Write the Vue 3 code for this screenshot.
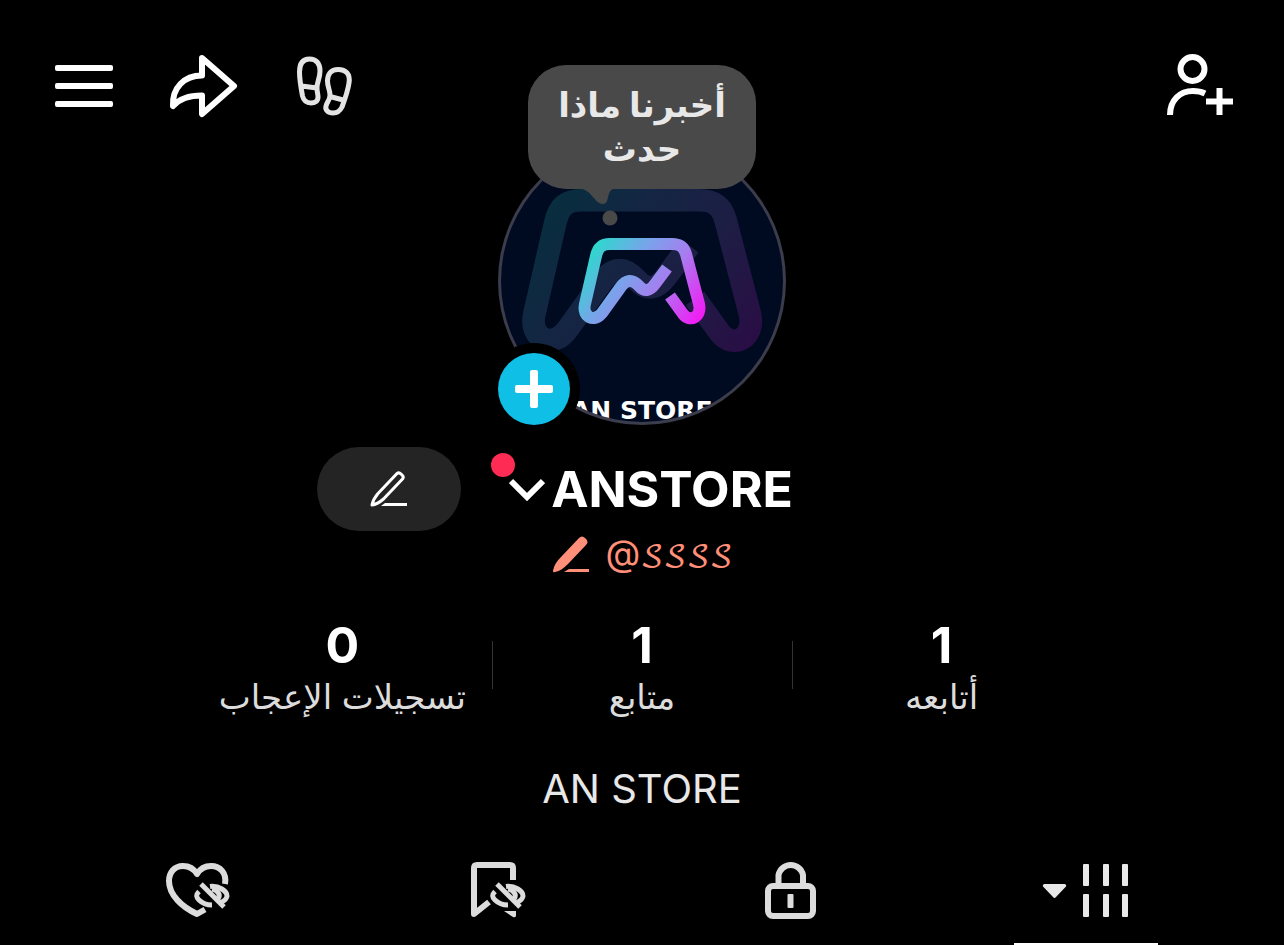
<template>
    <main class="profile">
        <header class="hero">
            <nav class="actions">
                <button class="icon-btn" aria-label="القائمة">
                    <svg viewBox="0 0 72 72" class="icon">
                        <rect v-for="y in [15, 33, 51]" :key="y" x="7" :y="y" width="58" height="6" rx="2" fill="#fff" />
                    </svg>
                </button>
                <button class="icon-btn" aria-label="مشاركة">
                    <svg viewBox="0 0 72 72" class="icon line">
                        <path d="M34 8L66 36L34 64V45.500C22 45.500 12 48 5 56C4 38 16 25.500 34 25.500Z" />
                    </svg>
                </button>
                <button class="icon-btn" aria-label="الزيارات">
                    <svg viewBox="0 0 72 72" class="icon line steps">
                        <path d="M11.500 22C11.500 13 15 9 21.500 9C28 9 32 13 32 21C32 29 28.500 33 29 38C29 42 30 44 30 47C30 51 27 53 23 53C18 53 15.500 50 14.500 46C13 38 11.500 30 11.500 22ZM13.500 36L29 38" />
                        <path d="M39.500 31C39.500 24 43 19.500 50 19.500C58 19.500 62.500 24 61 33C60 40 57 49 54 57C52 61 49 63 45 63C40 63 37 60 38 56C39 52 42 50 42 45C42 40 39.500 37 39.500 31ZM42 46.500L57 50.500" />
                    </svg>
                </button>
            </nav>

            <div class="avatar">
                <svg viewBox="0 0 288 288" class="avatar-art" aria-hidden="true">
                    <defs>
                        <linearGradient id="neon" gradientUnits="userSpaceOnUse" x1="95" y1="105" x2="205" y2="185">
                            <stop offset="0" stop-color="#28dccb" />
                            <stop offset=".33" stop-color="#78a4ea" />
                            <stop offset=".6" stop-color="#a77df0" />
                            <stop offset="1" stop-color="#f814f4" />
                        </linearGradient>
                        <clipPath id="round"><circle cx="144" cy="144" r="141" /></clipPath>
                    </defs>
                    <circle cx="144" cy="144" r="144" fill="#3b3c4c" />
                    <g clip-path="url(#round)">
                        <rect width="288" height="288" fill="#000b21" />
                        <g fill="none" stroke="url(#neon)" stroke-width="12">
                            <path :d="logo" opacity=".17" transform="translate(-128 -139) scale(1.89)" />
                            <path :d="logo" />
                        </g>
                        <text x="73" y="282" class="avatar-text">AN STORE</text>
                    </g>
                </svg>

                <button class="bubble" dir="rtl">
                    أخبرنا ماذا<br>حدث
                    <svg viewBox="0 0 40 40" class="tail" aria-hidden="true">
                        <path d="M0 0C10 2 13 15 21 15C28 15 24 3 31 0Z" />
                        <circle cx="28" cy="29" r="7.500" />
                    </svg>
                </button>

                <button class="add" aria-label="إضافة">
                    <svg viewBox="0 0 38 38" width="38" height="38" fill="#fff">
                        <rect x="15" width="8" height="38" rx="2" />
                        <rect y="15" width="38" height="8" rx="2" />
                    </svg>
                </button>
            </div>

            <nav class="actions end">
                <button class="icon-btn" aria-label="إضافة أصدقاء">
                    <svg viewBox="0 0 72 72" class="icon line">
                        <circle cx="28.500" cy="19" r="12" />
                        <path d="M6 65C6 50 16 41 29 41C34 41 37 41.500 41 43.500M55.500 38V65M42 51.500H69" />
                    </svg>
                </button>
            </nav>
        </header>

        <section class="name-row">
            <button class="edit" aria-label="تعديل الملف">
                <svg viewBox="0 0 40 40" width="40" height="40" fill="none" stroke="#fff" stroke-width="3" stroke-linejoin="round">
                    <path d="M3 36C4 31 6 28 9 24.500L28 4.500Q30 3 32 5L33.500 6.500Q35 8 33.500 10L14.500 30C11 33 8 35.500 3 36Z" />
                    <path d="M16 34H38V37H12Z" fill="#fff" stroke="none" />
                </svg>
            </button>
            <button class="account">
                <span class="dot"></span>
                <svg viewBox="0 0 36 24" class="chevron"><path d="M2 4L18 20L34 4" /></svg>
                <span>ANSTORE</span>
            </button>
        </section>

        <a href="#" class="handle">
            <svg viewBox="0 0 40 40" width="40" height="40" aria-hidden="true">
                <path d="M1 36C2 30 5 26 9 22L27 3Q30 0 33 3L34 4Q37 7 34 10L16 29C12 33 8 36 3 37Q1 38 1 36Z" />
                <path d="M17 34H37V37H12Z" />
            </svg>
            <span>@<span class="script">𝒮𝒮𝒮𝒮</span></span>
        </a>

        <section class="stats">
            <a v-for="stat in stats" :key="stat.label" href="#" class="stat">
                <strong>{{ stat.value }}</strong>
                <span dir="rtl">{{ stat.label }}</span>
            </a>
        </section>

        <p class="bio">AN STORE</p>

        <nav class="tabs">
            <button class="tab" aria-label="الإعجابات">
                <svg viewBox="0 0 72 72" class="icon line">
                    <path d="M63 31C65 20 58 13 49 13C42 13 38 16 35 21C32 16 27 13 21 13C12 13 7 20 7 28C7 42 20 54 35 61L43 56.500" />
                    <path v-for="d in eye" :key="d" :d="d" class="eye" />
                </svg>
            </button>
            <button class="tab" aria-label="المحفوظات">
                <svg viewBox="0 0 72 72" class="icon line">
                    <path d="M55 27V15Q55 12 52 12H19Q16 12 16 15V61L31 49" />
                    <path d="M46 58H58V63Q57 65 55 64Z" class="solid" />
                    <path v-for="d in eye" :key="d" :d="d" class="eye" />
                </svg>
            </button>
            <button class="tab" aria-label="خاص">
                <svg viewBox="0 0 72 72" class="icon line">
                    <rect x="14" y="33" width="45" height="30" rx="5" />
                    <path d="M24.500 32V22A12.500 12.500 0 0 1 49 22V32" />
                    <rect x="33.500" y="41" width="6" height="14" rx="1" class="solid" />
                </svg>
            </button>
            <button class="tab active" aria-label="المنشورات">
                <svg viewBox="0 0 88 72" class="icon wide">
                    <path d="M2 31H23Q25 32 24 33.500L14 44Q12.500 46 11 44L1 33.500Q0 32 2 31Z" />
                    <template v-for="x in [41, 61, 80]" :key="x">
                        <rect :x="x" y="11" width="6" height="22" rx="1" />
                        <rect :x="x" y="41" width="6" height="23" rx="1" />
                    </template>
                </svg>
            </button>
        </nav>
    </main>
</template>

<script setup>
const logo = 'M169 131L157 147Q149 158 141 149Q131 138 122 151L104 176C96 186 84 180 87 167L98 119C100 110 104 107 112 107H174C182 107 186 110 188 117L201 167C204 180 192 186 185 177L172 159'

// upper lid, pupil, lower lid, slash
const eye = [
    'M48 33.500C57 32.500 65 38 65 43C65 46 62 48 58 50',
    'M50 36C56 37 59 42 56 46',
    'M37 38.500C33.500 42 34 44 37 47C41 51 45 52 50 52',
    'M39 31L62 54'
]

const stats = [
    { value: 0, label: 'تسجيلات الإعجاب' },
    { value: 1, label: 'متابع' },
    { value: 1, label: 'أتابعه' }
]
</script>

<style>
body {
    margin: 0;
    background: #000;
}
</style>

<style scoped>
.profile {
    display: flex;
    flex-direction: column;
    min-height: 100vh;
    background: #000;
    color: #fff;
    font-family: Inter, 'DejaVu Sans', sans-serif;
}

button {
    padding: 0;
    border: 0;
    background: none;
    color: inherit;
    font-family: inherit;
    cursor: pointer;
}

a {
    color: inherit;
    text-decoration: none;
}

svg {
    display: block;
}

.hero {
    display: grid;
    grid-template-columns: 1fr auto 1fr;
    align-items: start;
    padding: 50px 48px 0;
}

.actions {
    display: flex;
    gap: 48px;
}

.actions.end {
    justify-content: flex-end;
}

.icon {
    width: 72px;
    height: 72px;
}

.icon.wide {
    width: 88px;
    fill: #e8e8e8;
}

.line {
    fill: none;
    stroke: #fff;
    stroke-width: 6;
    stroke-linejoin: round;
}

.steps {
    stroke: #e4e4e4;
    stroke-width: 5;
}

.avatar {
    position: relative;
    width: 288px;
    height: 288px;
    margin-top: 87px;
}

.avatar-art {
    width: 100%;
    height: 100%;
}

.avatar-text {
    font-family: 'DejaVu Sans', sans-serif;
    font-size: 25px;
    font-weight: bold;
    fill: #fff;
}

.bubble {
    position: absolute;
    top: -72px;
    left: 30px;
    right: 30px;
    padding: 18px 0;
    border-radius: 38px;
    background: #494949;
    color: #e8e8e8;
    font-size: 34px;
    font-weight: bold;
    line-height: 44px;
}

.tail {
    position: absolute;
    top: 100%;
    left: 54px;
    width: 40px;
    height: 40px;
    fill: #494949;
}

.add {
    position: absolute;
    left: 0;
    bottom: 0;
    display: grid;
    place-items: center;
    width: 72px;
    height: 72px;
    border-radius: 50%;
    background: #10bfe6;
    box-shadow: 0 0 0 10px #000;
}

.name-row {
    display: grid;
    grid-template-columns: 1fr auto 1fr;
    align-items: center;
    column-gap: 30px;
    margin-top: 22px;
}

.edit {
    display: grid;
    place-items: center;
    justify-self: end;
    width: 144px;
    height: 84px;
    border-radius: 42px;
    background: #242424;
}

.account {
    position: relative;
    display: flex;
    align-items: center;
    gap: 6px;
    padding-left: 18px;
    font-size: 50px;
    font-weight: 700;
    line-height: 72px;
}

.dot {
    position: absolute;
    top: 0;
    left: 0;
    width: 24px;
    height: 24px;
    border-radius: 50%;
    background: #fe2c55;
}

.chevron {
    width: 36px;
    height: 24px;
    fill: none;
    stroke: #fff;
    stroke-width: 6;
}

.handle {
    display: flex;
    justify-content: center;
    align-items: center;
    gap: 14px;
    height: 48px;
    color: #ff8f78;
    fill: #ff8f78;
    font-size: 36px;
    line-height: 48px;
}

.script {
    font-family: 'DejaVu Math TeX Gyre', 'DejaVu Serif', serif;
    font-size: 30px;
}

.stats {
    display: grid;
    grid-template-columns: repeat(3, 1fr);
    width: 70%;
    margin: 36px auto 0;
}

.stat {
    position: relative;
    display: flex;
    flex-direction: column;
    align-items: center;
}

.stat + .stat::before {
    content: '';
    position: absolute;
    top: 26px;
    left: 0;
    width: 1px;
    height: 48px;
    background: #333;
}

.stat strong {
    font-size: 50px;
    font-weight: 700;
    line-height: 60px;
}

.stat span {
    color: #dcdcdc;
    font-size: 34px;
    line-height: 44px;
}

.bio {
    margin: 42px 0 0;
    color: #e8e8e8;
    font-size: 40px;
    line-height: 56px;
    text-align: center;
}

.tabs {
    display: grid;
    grid-template-columns: repeat(4, 1fr);
    padding: 0 50px;
    margin-top: 36px;
}

.tab {
    position: relative;
    display: flex;
    justify-content: center;
    padding-bottom: 20px;
}

.tab .line {
    stroke: #dcdcdc;
}

.tab .eye {
    stroke-width: 5;
}

.tab .solid {
    fill: #dcdcdc;
    stroke: none;
}

.tab.active::after {
    content: '';
    position: absolute;
    bottom: 0;
    width: 144px;
    height: 2px;
    background: #fff;
}
</style>
